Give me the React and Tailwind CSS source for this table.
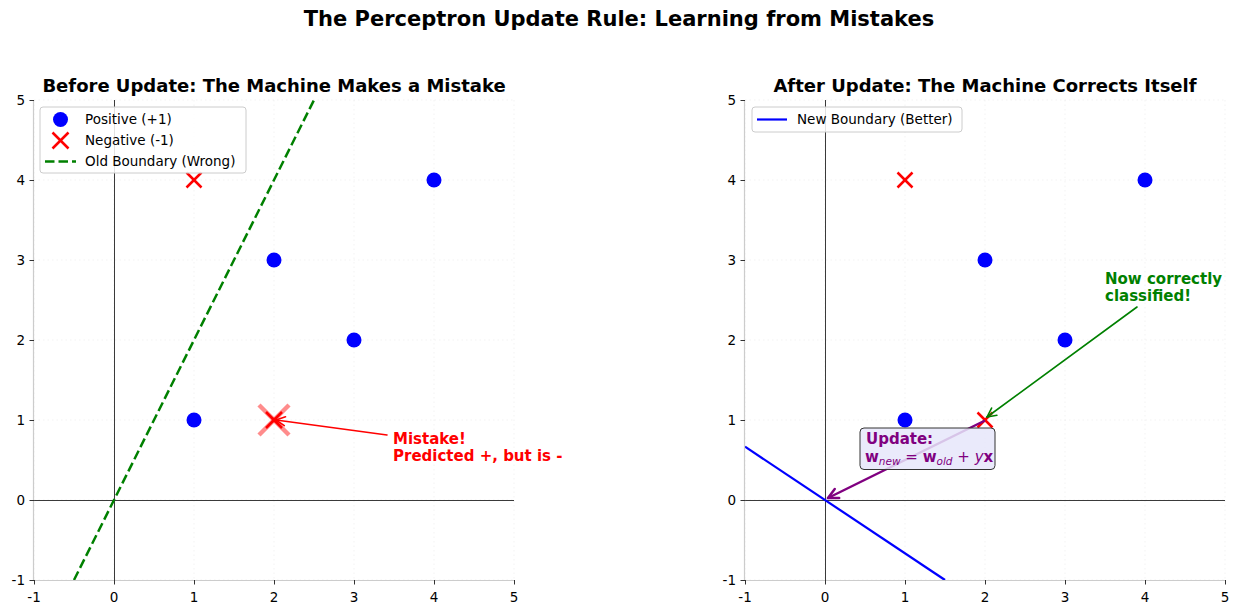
const FONT = '"DejaVu Sans", "Liberation Sans", sans-serif';
const RED = '#ff0000';
const BLUE = '#0000ff';
const GREEN = '#008000';
const PURPLE = '#800080';
const TICKS = [-1, 0, 1, 2, 3, 4, 5];
const TOP = 98; // page y where the plot svgs start

// data -> page coords, one unit = 80px
const scaleX = (x0) => (v) => x0 + 80 * (v + 1);
const Y = (v) => 500 - 80 * v;

function arrowHead(x1, y1, x2, y2, L = 9, W = 4.5) {
  const dx = x2 - x1;
  const dy = y2 - y1;
  const len = Math.hypot(dx, dy);
  const ux = dx / len;
  const uy = dy / len;
  const bx = x2 - ux * L;
  const by = y2 - uy * L;
  return `${bx - uy * W},${by + ux * W} ${x2},${y2} ${bx + uy * W},${by - ux * W}`;
}

function Arrow({ from, to, color, width = 1.5, L, W }) {
  return (
    <g stroke={color} strokeWidth={width} fill="none" strokeLinecap="round" strokeLinejoin="round">
      <line x1={from[0]} y1={from[1]} x2={to[0]} y2={to[1]} />
      <polyline points={arrowHead(from[0], from[1], to[0], to[1], L, W)} />
    </g>
  );
}

function Cross({ cx, cy, s = 7.5, w = 2.5, color = RED, opacity = 1 }) {
  return (
    <g stroke={color} strokeWidth={w} strokeOpacity={opacity}>
      <line x1={cx - s} y1={cy - s} x2={cx + s} y2={cy + s} />
      <line x1={cx - s} y1={cy + s} x2={cx + s} y2={cy - s} />
    </g>
  );
}

function Dot({ cx, cy }) {
  return <circle cx={cx} cy={cy} r={7.5} fill={BLUE} />;
}

function Axes({ x0, children, overlay }) {
  const X = scaleX(x0);
  return (
    <g fontFamily={FONT}>
      {TICKS.map((t) => (
        <g key={t} stroke="#000" strokeOpacity="0.05" strokeDasharray="1.5 3">
          <line x1={X(t)} x2={X(t)} y1={Y(5)} y2={Y(-1)} />
          <line x1={X(-1)} x2={X(5)} y1={Y(t)} y2={Y(t)} />
        </g>
      ))}
      <line x1={X(-1)} x2={X(5)} y1={Y(0) + 0.5} y2={Y(0) + 0.5} stroke="#3a3a3a" strokeWidth="1" />
      <line x1={X(0) + 0.5} x2={X(0) + 0.5} y1={Y(5)} y2={Y(-1)} stroke="#3a3a3a" strokeWidth="1" />
      {children}
      <line x1={X(-1) - 0.5} x2={X(-1) - 0.5} y1={Y(5)} y2={Y(-1)} stroke="#cccccc" strokeWidth="1.2" />
      <line x1={X(-1)} x2={X(5)} y1={Y(-1) + 0.5} y2={Y(-1) + 0.5} stroke="#cccccc" strokeWidth="1.2" />
      {TICKS.map((t) => (
        <g key={'t' + t}>
          <line x1={X(-1) - 4.5} x2={X(-1)} y1={Y(t) + 0.5} y2={Y(t) + 0.5} stroke="#333" strokeWidth="1" />
          <line x1={X(t) + 0.5} x2={X(t) + 0.5} y1={Y(-1)} y2={Y(-1) + 4.5} stroke="#333" strokeWidth="1" />
          <text x={X(-1) - 9} y={Y(t) + 5} fontSize="13.5" textAnchor="end" fill="#000">
            {t}
          </text>
          <text x={X(t)} y={Y(-1) + 22} fontSize="13.5" textAnchor="middle" fill="#000">
            {t}
          </text>
        </g>
      ))}
      {overlay}
    </g>
  );
}

function BeforePlot() {
  const X = scaleX(34);
  return (
    <Axes
      x0={34}
      overlay={
        <g fontSize="13.5" fill="#000">
          <rect x="40" y="107" width="206" height="66" rx="3" fill="#fff" fillOpacity="0.85" stroke="#cccccc" />
          <circle cx="60.5" cy="119.5" r="7.5" fill={BLUE} />
          <text x="85" y="124">Positive (+1)</text>
          <Cross cx={60.5} cy={140.5} s={8} />
          <text x="85" y="145">Negative (-1)</text>
          <line x1="45" x2="76" y1="161.5" y2="161.5" stroke={GREEN} strokeWidth="2.5" strokeDasharray="9.5 4" />
          <text x="85" y="166">Old Boundary (Wrong)</text>
        </g>
      }
    >
      <line
        x1={X(-0.5)}
        y1={Y(-1)}
        x2={X(2.5)}
        y2={Y(5)}
        stroke={GREEN}
        strokeWidth="2.5"
        strokeDasharray="9.5 4"
      />
      <Dot cx={X(1)} cy={Y(1)} />
      <Dot cx={X(2)} cy={Y(3)} />
      <Dot cx={X(3)} cy={Y(2)} />
      <Dot cx={X(4)} cy={Y(4)} />
      <Cross cx={X(1)} cy={Y(4)} />
      <Cross cx={X(2)} cy={Y(1)} s={15} w={4.5} opacity={0.45} />
      <Cross cx={X(2)} cy={Y(1)} s={8} w={2.5} />
      <Arrow from={[387, 435]} to={[276, 420]} color={RED} width={1.6} />
      <text fontSize="15" fontWeight="bold" fill={RED}>
        <tspan x="393" y="443.5">Mistake!</tspan>
        <tspan x="393" y="460.5">Predicted +, but is -</tspan>
      </text>
    </Axes>
  );
}

function AfterPlot() {
  const X = scaleX(745);
  return (
    <Axes
      x0={745}
      overlay={
        <g fontSize="13.5" fill="#000">
          <rect x="752" y="107" width="210" height="25" rx="3" fill="#fff" fillOpacity="0.85" stroke="#cccccc" />
          <line x1="757" x2="787" y1="119.5" y2="119.5" stroke={BLUE} strokeWidth="2.2" />
          <text x="797" y="124">New Boundary (Better)</text>
        </g>
      }
    >
      <line x1={X(-1)} y1={Y(2 / 3)} x2={X(1.5)} y2={Y(-1)} stroke={BLUE} strokeWidth="2.2" />
      <Dot cx={X(1)} cy={Y(1)} />
      <Dot cx={X(2)} cy={Y(3)} />
      <Dot cx={X(3)} cy={Y(2)} />
      <Dot cx={X(4)} cy={Y(4)} />
      <Cross cx={X(1)} cy={Y(4)} />
      <Cross cx={X(2)} cy={Y(1)} />
      <Arrow from={[1137, 307]} to={[987, 417]} color={GREEN} width={1.6} />
      <text fontSize="15" fontWeight="bold" fill={GREEN}>
        <tspan x="1105" y="284">Now correctly</tspan>
        <tspan x="1105" y="300.5">classified!</tspan>
      </text>
      <Arrow from={[984, 421]} to={[828, 498]} color={PURPLE} width={2.5} L={10} W={5} />
      <rect x="860" y="428" width="135" height="41.5" rx="4" fill="#e6e6fa" fillOpacity="0.85" stroke="#333" strokeWidth="1" />
      <text fill={PURPLE} fontSize="15">
        <tspan x="866" y="443.5" fontWeight="bold">
          Update:
        </tspan>
        <tspan x="865" y="462" fontWeight="bold">
          w
        </tspan>
        <tspan fontStyle="italic" fontSize="10.5" dy="2.5">
          new
        </tspan>
        <tspan dy="-2.5">{' = '}</tspan>
        <tspan fontWeight="bold">w</tspan>
        <tspan fontStyle="italic" fontSize="10.5" dy="2.5">
          old
        </tspan>
        <tspan dy="-2.5">{' + '}</tspan>
        <tspan fontStyle="italic">y</tspan>
        <tspan fontWeight="bold">x</tspan>
      </text>
    </Axes>
  );
}

function Panel({ title, left, width, children }) {
  return (
    <div className="flex flex-col" style={{ width }}>
      <h2 className="pl-[34px] w-[514px] text-center text-[18px] leading-[24px] font-bold text-black whitespace-nowrap">
        {title}
      </h2>
      <svg
        width={width}
        height={614 - TOP}
        viewBox={`${left} ${TOP} ${width} ${614 - TOP}`}
        className="overflow-visible block"
      >
        {children}
      </svg>
    </div>
  );
}

export default function App() {
  return (
    <div
      className="w-[1238px] h-[614px] bg-white overflow-hidden pt-[5px]"
      style={{ fontFamily: FONT }}
    >
      <h1 className="text-center text-[21px] leading-[28px] font-bold text-black">
        The Perceptron Update Rule: Learning from Mistakes
      </h1>
      <div className="flex mt-[41px]">
        <Panel title="Before Update: The Machine Makes a Mistake" left={0} width={540}>
          <BeforePlot />
        </Panel>
        <div className="ml-[171px]">
          <Panel title="After Update: The Machine Corrects Itself" left={711} width={527}>
            <AfterPlot />
          </Panel>
        </div>
      </div>
    </div>
  );
}
